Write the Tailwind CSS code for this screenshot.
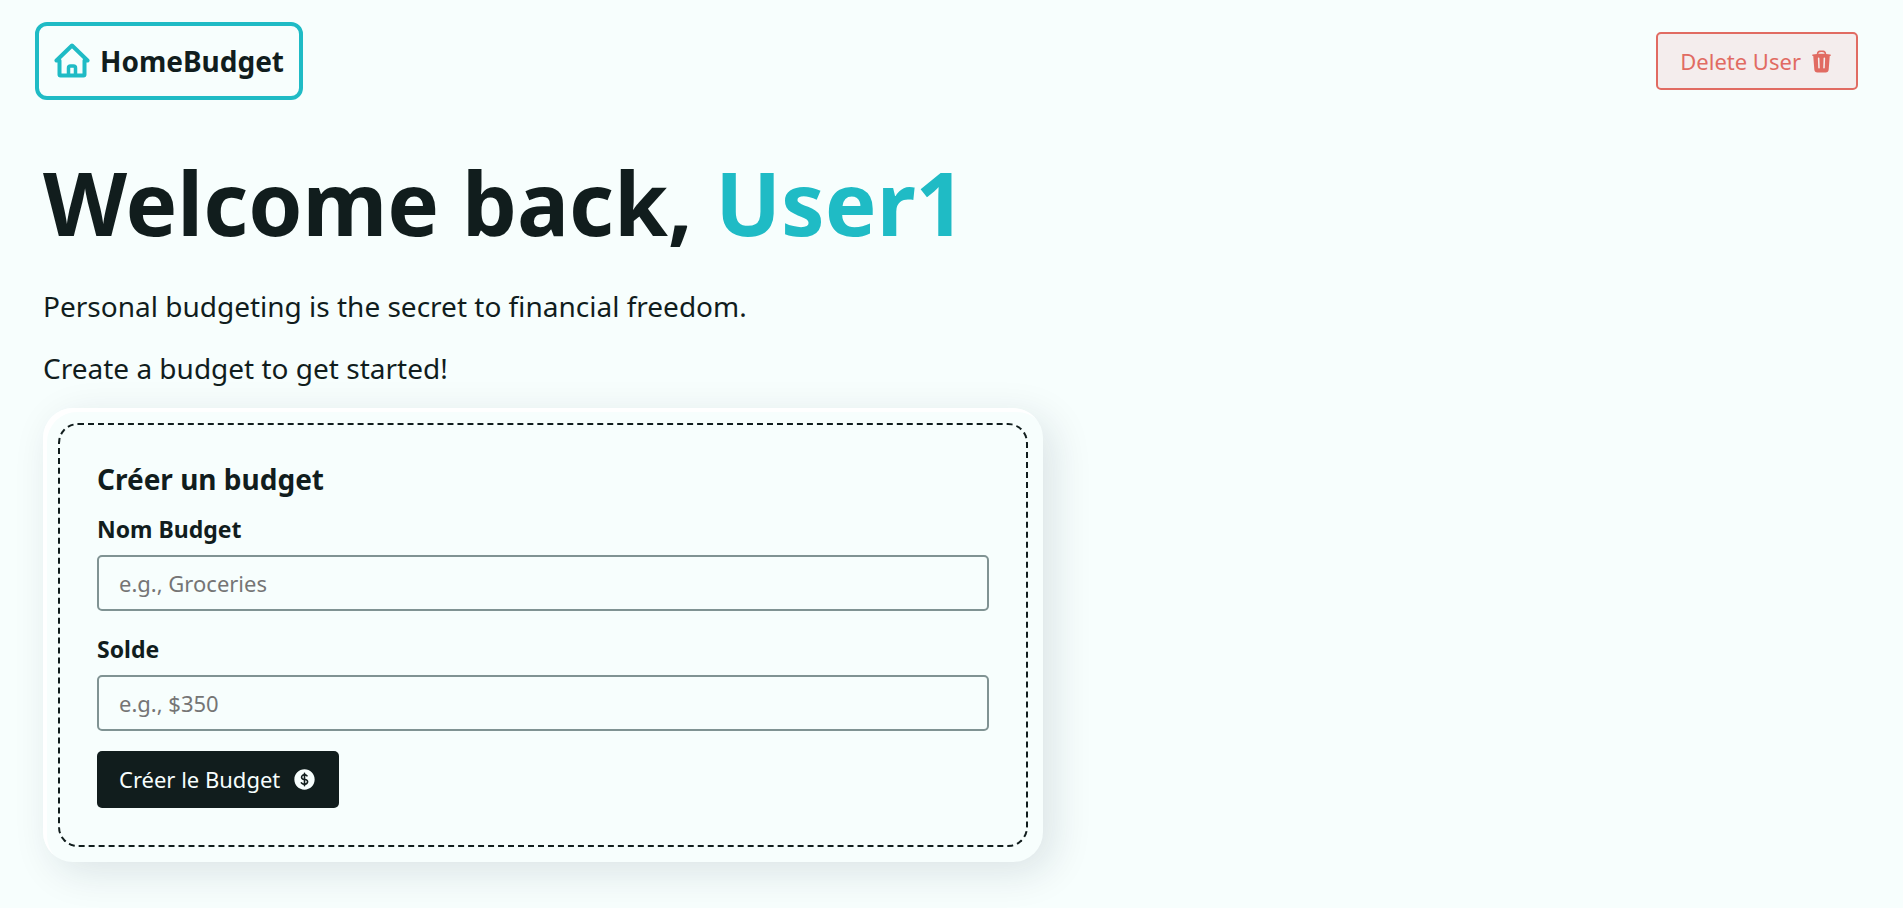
<!DOCTYPE html>
<html lang="fr">
<head>
<meta charset="utf-8">
<meta name="viewport" content="width=device-width, initial-scale=1">
<title>HomeBudget</title>
<script src="https://cdn.jsdelivr.net/npm/@tailwindcss/browser@4"></script>
</head>
<body class="min-h-screen bg-[#f7fefd] font-['Noto_Sans',sans-serif] text-[#111d1d]">
<header class="flex items-center justify-between pt-[22px] pl-[35px] pr-[45px]">
  <a href="#" class="flex h-[78px] items-center gap-[10px] rounded-xl border-4 border-[#1fbbc5] px-[15px] text-[28px] font-bold">
    <svg class="size-9 text-[#1fbbc5]" viewBox="0 0 36 36" fill="none" stroke="currentColor" stroke-width="4" stroke-linecap="round" stroke-linejoin="round" aria-hidden="true"><path d="M2.500 17.500 18 2.500l15.500 15M5.500 17.500v14q0 1 1 1h23q1 0 1-1v-14"/><path stroke-width="3.500" d="M14.500 32v-7q0-2 2-2h3q2 0 2 2v7"/></svg>
    <span>HomeBudget</span>
  </a>
  <button type="button" class="flex h-[58px] items-center gap-2 rounded-[5px] border-2 border-[#e16b62] bg-[#f4eded] px-[22px] text-[22px] text-[#e16b62]">
    <span>Delete User</span>
    <svg class="size-[25px]" viewBox="0 0 24 24" fill="currentColor" fill-rule="evenodd" aria-hidden="true"><path d="M16.5 4.478v.227a48.816 48.816 0 0 1 3.878.512.75.75 0 1 1-.256 1.478l-.209-.035-1.005 13.07a3 3 0 0 1-2.991 2.77H8.084a3 3 0 0 1-2.991-2.77L4.087 6.66l-.209.035a.75.75 0 0 1-.256-1.478A48.567 48.567 0 0 1 7.5 4.705v-.227c0-1.564 1.213-2.9 2.816-2.951a52.662 52.662 0 0 1 3.369 0c1.603.051 2.815 1.387 2.815 2.951Zm-6.136-1.452a51.196 51.196 0 0 1 3.273 0C14.39 3.05 15 3.684 15 4.478v.113a49.488 49.488 0 0 0-6 0v-.113c0-.794.609-1.428 1.364-1.452Zm-.355 5.945a.75.75 0 1 0-1.5.058l.347 9a.75.75 0 1 0 1.499-.058l-.346-9Zm5.48.058a.75.75 0 1 0-1.498-.058l-.347 9a.75.75 0 0 0 1.5.058l.345-9Z"/></svg>
  </button>
</header>
<main class="px-[43px] pt-[52px] pb-[46px]">
  <h1 class="text-[87px] leading-[100px] font-bold">Welcome back, <span class="text-[#1fbbc5]">User1</span></h1>
  <div class="flex flex-col gap-[22px] pt-[34px] text-[28px] leading-10">
    <p>Personal budgeting is the secret to financial freedom.</p>
    <p>Create a budget to get started!</p>
  </div>
  <section class="mt-5 max-w-[1000px] rounded-[30px] p-[15px] shadow-[inset_4px_4px_0_#fff,10px_10px_40px_rgba(17,29,60,0.12)]">
    <form class="flex flex-col items-start rounded-[20px] border-2 border-dashed border-[#111d1d] px-[37px] pt-9 pb-[37px]">
      <h2 class="text-[28px] leading-9 font-bold">Créer un budget</h2>
      <label for="name" class="mt-4 text-[23px] leading-8 font-bold">Nom Budget</label>
      <input id="name" type="text" placeholder="e.g., Groceries" class="mt-[10px] h-14 w-full rounded-[5px] border-2 border-[#809393] px-5 text-[22px] placeholder:text-[#757575]">
      <label for="amount" class="mt-[22px] text-[23px] leading-8 font-bold">Solde</label>
      <input id="amount" type="text" inputmode="decimal" placeholder="e.g., $350" class="mt-[10px] h-14 w-full rounded-[5px] border-2 border-[#809393] px-5 text-[22px] placeholder:text-[#757575]">
      <button type="submit" class="mt-5 flex h-[57px] items-center gap-3 rounded-[5px] bg-[#111d1d] px-[22px] text-[22px] text-[#f7fefd]">
        <span>Créer le Budget</span>
        <svg class="size-[25px]" viewBox="0 0 24 24" fill="currentColor" fill-rule="evenodd" aria-hidden="true"><path d="M12 2.25c-5.385 0-9.75 4.365-9.75 9.75s4.365 9.75 9.75 9.75 9.75-4.365 9.75-9.75S17.385 2.25 12 2.25ZM12.75 6a.75.75 0 0 0-1.5 0v.816a3.836 3.836 0 0 0-1.72.756c-.712.566-1.112 1.35-1.112 2.178 0 .829.4 1.612 1.113 2.178.502.4 1.102.647 1.719.756v2.978a2.536 2.536 0 0 1-.921-.421l-.879-.66a.75.75 0 0 0-.9 1.2l.879.66c.533.4 1.169.645 1.821.75V18a.75.75 0 0 0 1.5 0v-.81a4.124 4.124 0 0 0 1.821-.749c.745-.559 1.179-1.344 1.179-2.191 0-.847-.434-1.632-1.179-2.191a4.122 4.122 0 0 0-1.821-.75V8.354c.29.082.559.213.786.393l.415.33a.75.75 0 0 0 .933-1.175l-.415-.33a3.836 3.836 0 0 0-1.719-.755V6ZM11.25 8.35a2.3 2.3 0 0 0-.79.39c-.34.27-.5.62-.5 1s.16.73.5 1c.2.16.47.3.79.39V8.35ZM12.750 12.800v2.850c.350-.090.670-.230.920-.420.400-.300.580-.650.580-.980s-.180-.680-.580-.980a2.500 2.500 0 0 0-.920-.470Z"/></svg>
      </button>
    </form>
  </section>
</main>
</body>
</html>
